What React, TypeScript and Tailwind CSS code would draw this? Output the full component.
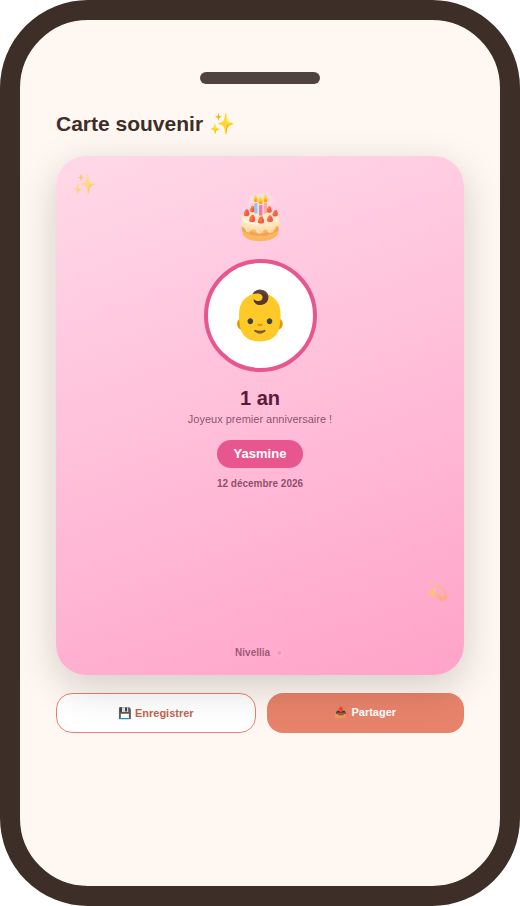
function MemoryCard() {
  return (
    <article className="relative z-10 flex min-h-[519px] flex-col items-center rounded-[30px] bg-linear-[160deg,#ffd9e8,#ffa3c9] px-6 pt-8 pb-3.5 text-center shadow-[0_12px_40px_rgba(0,0,0,0.18)]">
      <span className="absolute top-4 left-4 text-[20px] leading-6 opacity-50">✨</span>
      <span className="absolute right-4 bottom-18 text-[18px] leading-6 opacity-40">💫</span>

      <div className="text-[44px] leading-14">🎂</div>
      <div className="mt-[15px] flex size-[113px] items-center justify-center rounded-full border-4 border-[#e8568f] bg-white text-[48px] leading-14">
        👶
      </div>
      <h2 className="mt-3 text-[20px] leading-7 font-bold text-[#5a1a3a]">1 an</h2>
      <p className="text-[11px] leading-3.5 text-[#5a1a3a]/70">Joyeux premier anniversaire !</p>
      <div className="mt-3.5 rounded-full bg-[#e8568f] px-[17px] text-[13px] leading-7 font-bold text-white">
        Yasmine
      </div>
      <time dateTime="2026-12-12" className="mt-2 text-[10px] leading-4 font-bold text-[#5a1a3a]/70">
        12 décembre 2026
      </time>

      <footer className="mt-auto text-[10px] leading-4 font-bold text-[#5a1a3a]/60">
        Nivellia <span className="opacity-60">🌸</span>
      </footer>
    </article>
  );
}

function App() {
  return (
    <div className="min-h-screen bg-white font-['Liberation_Sans',sans-serif]">
      <div className="min-h-screen rounded-[88px] border-20 border-[#3d2e28] bg-[#fff8f2] px-9 pt-13 pb-9">
        <div className="mx-auto h-3 w-30 rounded-full bg-[#50433f]" />
        <h1 className="mt-6 mb-4 text-[21px] leading-8 font-bold text-[#3d2e28]">Carte souvenir ✨</h1>
        <MemoryCard />
        <div className="mt-[18px] flex gap-[11px] text-[11px] leading-4 font-bold">
          <button type="button" className="h-10 flex-1 rounded-2xl border border-[#e8836b] bg-white text-[#c4634d]">
            💾 Enregistrer
          </button>
          <button type="button" className="h-10 flex-1 rounded-2xl bg-[#e8836b] pb-0.5 text-white">
            📤 Partager
          </button>
        </div>
      </div>
    </div>
  );
}

export default App;
